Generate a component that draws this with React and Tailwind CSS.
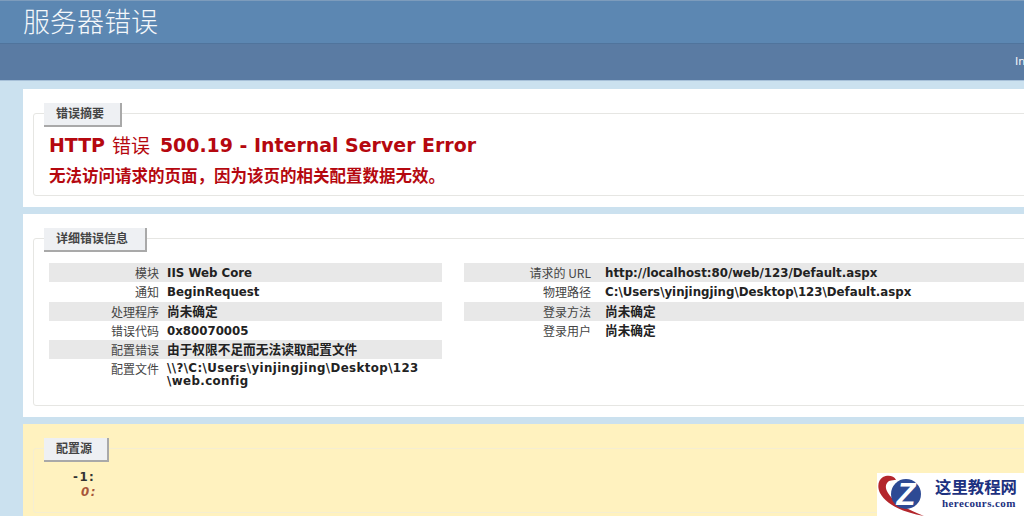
const FONT = "font-['DejaVu_Sans','Noto_Sans_CJK_SC',sans-serif]";
const CJK = "font-['Noto_Sans_CJK_SC',sans-serif]";
const CJK_VALUE = 'text-[12.7px] pt-[3px]';
const LATIN_VALUE = 'text-[11.8px] pt-[4px]';

const leftRows = [
  ['模块', 'IIS Web Core'],
  ['通知', 'BeginRequest'],
  ['处理程序', '尚未确定', CJK_VALUE],
  ['错误代码', '0x80070005'],
  ['配置错误', '由于权限不足而无法读取配置文件', CJK_VALUE],
  ['配置文件', '\\\\?\\C:\\Users\\yinjingjing\\Desktop\\123 \\web.config', 'text-[11.8px] pt-[3px] tracking-[0.4px] w-[260px] flex-none'],
];

const rightRows = [
  ['请求的 URL', 'http://localhost:80/web/123/Default.aspx'],
  ['物理路径', 'C:\\Users\\yinjingjing\\Desktop\\123\\Default.aspx'],
  ['登录方法', '尚未确定', CJK_VALUE],
  ['登录用户', '尚未确定', CJK_VALUE],
];

function Section({ title, legendWidth, yellow, children }) {
  return (
    <div className={`mx-[10px] border rounded-[3px] px-[15px] ${yellow ? 'border-[#f5eed2]' : 'border-[#e6e6e3]'}`}>
      <div
        className={`-mt-[11px] ml-[-5px] h-[24px] pl-[12px] bg-[#eef0f3] border-r-2 border-b-2 border-[#a9a9a9] text-[12px] leading-[22px] font-bold text-[#444] ${legendWidth}`}
      >
        {title}
      </div>
      {children}
    </div>
  );
}

function InfoTable({ rows, widthClass, labelClass }) {
  return (
    <div className={widthClass}>
      {rows.map(([label, value, valueClass], i) => (
        <div key={label} className={`flex min-h-[19.3px] ${i % 2 === 0 ? 'bg-[#e8e8e8]' : ''}`}>
          <div className={`shrink-0 text-right text-[12px] leading-[19px] text-[#444] ${CJK} ${labelClass}`}>{label}</div>
          <div className={`min-w-0 flex-1 leading-[13px] font-bold text-[#222] break-words ${valueClass || LATIN_VALUE}`}>{value}</div>
        </div>
      ))}
    </div>
  );
}

function Logo() {
  return (
    <div className="absolute right-0 bottom-0 w-[147px] h-[43px] bg-white flex">
      <svg width="57" height="43" viewBox="0 0 57 43" className="shrink-0">
        <path d="M6 4 C1 7 0 14 3 20 C9 31 24 39 47 43 C30 36 17 30 11 20 C8 15 8 11 12 8 C15 7 17 7 19 7 C17 2 10 2 6 4 Z" fill="#b3262c" />
        <circle cx="29" cy="21" r="15" fill="#2d4a94" />
        <text x="29" y="32" textAnchor="middle" fontSize="31" fontWeight="700" fontStyle="italic" fill="#fff" fontFamily="Liberation Sans">Z</text>
      </svg>
      <div className="pt-[3px] pl-[1px]">
        <div className={`text-[16.4px] leading-[20px] font-bold text-[#1d3180] ${CJK}`}>这里教程网</div>
        <div className="pl-[7px] text-[11px] leading-[15px] font-bold text-[#1d3180] font-['Liberation_Serif',serif] tracking-[0.4px]">herecours.com</div>
      </div>
    </div>
  );
}

export default function App() {
  return (
    <div className={`relative w-[1024px] h-[516px] overflow-hidden bg-[#cbe1ef] ${FONT}`}>
      <div className="h-[44px] bg-[#5c87b2] border-t border-[#7d9cbc] border-b border-b-[#50749c] pl-[23px]">
        <h1 className={`text-[27px] leading-[40px] font-light text-[#f4f7fa] ${CJK}`}>服务器错误</h1>
      </div>
      <div className="h-[37px] bg-[#5a7ba3] border-b border-[#a7c0d8] flex items-center pl-[1015px]">
        <span className="text-[11px] text-[#f2f5f8] whitespace-nowrap">Internet Information Services</span>
      </div>

      <div className="w-[1300px] pl-[23px] pt-[8px]">
        <section className="bg-white h-[118px] pt-[24px]">
          <Section title="错误摘要" legendWidth="w-[78px]">
            <div className="h-[68px] pt-[4px]">
              <h2 className="text-[18.95px] leading-[28px] font-bold text-[#b5080f] flex">
                <span>HTTP</span>
                <span className={`ml-[7px] mr-[10px] font-normal ${CJK}`}>错误</span>
                <span>500.19 - Internal Server Error</span>
              </h2>
              <h3 className={`text-[16.5px] leading-[33px] font-bold text-[#b5080f] ${CJK}`}>无法访问请求的页面，因为该页的相关配置数据无效。</h3>
            </div>
          </Section>
        </section>

        <section className="bg-white h-[203px] mt-[7px] pt-[24px]">
          <Section title="详细错误信息" legendWidth="w-[103px]">
            <div className="h-[153px] pt-[11px] flex gap-[22px]">
              <InfoTable rows={leftRows} widthClass="w-[393px]" labelClass="w-[110px] mr-[8px]" />
              <InfoTable rows={rightRows} widthClass="w-[700px]" labelClass="w-[127px] mr-[14px]" />
            </div>
          </Section>
        </section>

        <section className="bg-[#fff2bf] h-[100px] mt-[7px] pt-[24px]">
          <Section title="配置源" legendWidth="w-[65px]" yellow>
            <div className="h-[50px] pt-[8px] pl-[24px] text-[11.8px] leading-[15px] font-bold text-[#333] tracking-[1.5px]">
              <div>-1:</div>
              <div className="pl-[8px] italic text-[#a8563a]">0:</div>
            </div>
          </Section>
        </section>
      </div>

      <Logo />
    </div>
  );
}
